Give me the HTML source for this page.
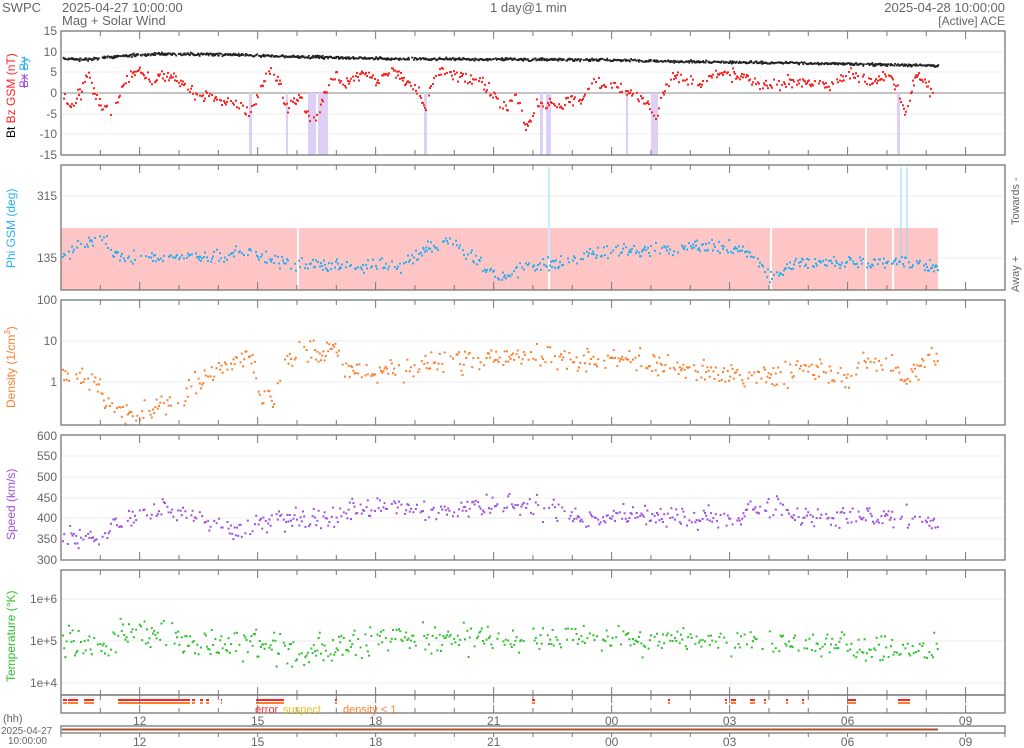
<!DOCTYPE html>
<html><head><meta charset="utf-8">
<style>
html,body{margin:0;padding:0;background:#fff;}
svg{display:block;font-family:"Liberation Sans",sans-serif;}
text{fill:#666;}
</style></head>
<body>
<svg id="s" width="1024" height="748" xmlns="http://www.w3.org/2000/svg">
<text x="2" y="12" font-size="13">SWPC</text>
<text x="62" y="12" font-size="13">2025-04-27 10:00:00</text>
<text x="62" y="25" font-size="13">Mag + Solar Wind</text>
<text x="490" y="12" font-size="13">1 day@1 min</text>
<text x="1005" y="12" font-size="13" text-anchor="end">2025-04-28 10:00:00</text>
<text x="1005" y="25" font-size="12" text-anchor="end">[Active] ACE</text>
<g id="bg"></g>
<g id="pts"></g>
<g id="frame" fill="none" stroke="#777" stroke-width="1.3"></g>
<g font-size="12" text-anchor="end">
<text x="57" y="35">15</text><text x="57" y="56">10</text><text x="57" y="76">5</text><text x="57" y="97">0</text><text x="57" y="118">-5</text><text x="57" y="138">-10</text><text x="57" y="159">-15</text>
<text x="57" y="200">315</text><text x="57" y="262">135</text>
<text x="57" y="304">100</text><text x="57" y="345">10</text><text x="57" y="386">1</text>
<text x="57" y="440">600</text><text x="57" y="460">550</text><text x="57" y="481">500</text><text x="57" y="502">450</text><text x="57" y="522">400</text><text x="57" y="543">350</text><text x="57" y="564">300</text>
<text x="57" y="603">1e+6</text><text x="57" y="645">1e+5</text><text x="57" y="687">1e+4</text>
</g>
<g font-size="12">
<text transform="translate(15,138) rotate(-90)"><tspan style="fill:#000">Bt</tspan>  <tspan style="fill:#f22">Bz GSM (nT)</tspan></text>
<text transform="translate(28,88) rotate(-90)"><tspan style="fill:#a050e0;text-decoration:line-through">Bx</tspan> <tspan style="fill:#2ab0f0;text-decoration:line-through">By</tspan></text>
<text transform="translate(15,268) rotate(-90)" style="fill:#2ab0f0">Phi GSM (deg)</text>
<text transform="translate(15,408) rotate(-90)" style="fill:#f88030">Density (1/cm<tspan font-size="8" dy="-5">3</tspan><tspan dy="5">)</tspan></text>
<text transform="translate(15,540) rotate(-90)" style="fill:#a050e0">Speed (km/s)</text>
<text transform="translate(15,682) rotate(-90)" style="fill:#30c030">Temperature (°K)</text>
<text transform="translate(1019,225) rotate(-90)" font-size="11">Towards -</text>
<text transform="translate(1019,292) rotate(-90)" font-size="11">Away +</text>
</g>
<g font-size="12" text-anchor="middle" id="xl"></g>
<text x="3" y="722" font-size="11">(hh)</text>
<text x="1" y="734" font-size="10">2025-04-27</text>
<text x="8" y="744" font-size="10">10:00:00</text>
<text x="255" y="713" font-size="11" style="fill:#f33">error</text>
<text x="283" y="713" font-size="11" style="fill:#f0c020">suspect</text>
<text x="343" y="713" font-size="11" style="fill:#f88030">density &lt; 1</text>
</svg>
<script>
var NS="http://www.w3.org/2000/svg";
function el(p,t,a){var e=document.createElementNS(NS,t);for(var k in a)e.setAttribute(k,a[k]);p.appendChild(e);return e;}
var seed=7;function rnd(){seed=(seed*16807)%2147483647;return seed/2147483647;}
function gauss(){return (rnd()+rnd()+rnd()-1.5)*1.3;}
var X0=61,X1=1005,PH=39.33,XE=938;
var panels=[[31,155],[165,290],[300,425],[435,560],[570,695],[695,713]];
var bg=document.getElementById('bg'),pts=document.getElementById('pts'),fr=document.getElementById('frame');
[[52,72,93,114,134],[196,258],[341,382],[456,477,498,518,539],[599,641,683]].forEach(function(a,i){a.forEach(function(y){el(bg,'line',{x1:X0,x2:X1,y1:y,y2:y,stroke:'#eee'});});});
el(bg,'line',{x1:X0,x2:X1,y1:93,y2:93,stroke:'#888'});
el(bg,'rect',{x:X0,y:228,width:XE-X0,height:62,fill:'#ffc8c8'});
for(var sx=X0+3;sx<XE;sx+=4)el(bg,'line',{x1:sx,x2:sx,y1:228,y2:290,stroke:'#ffb8b8','stroke-width':0.6});
[297,548,770,865,892].forEach(function(x){el(bg,'rect',{x:x,y:228,width:2,height:62,fill:'#fff'});});
[[249,3],[286,2],[308,5],[313,3],[318,10],[424,3],[540,3],[546,5],[626,2],[651,7],[897,3]].forEach(function(r){el(bg,'rect',{x:r[0],y:93,width:r[1],height:62,fill:'#ddd0f4'});});
[549,901,907].forEach(function(x){el(bg,'line',{x1:x,x2:x,y1:167,y2:260,stroke:'#8fd8f8','stroke-width':1});});
function interp(k,x){for(var i=0;i<k.length-1;i++){if(x<=k[i+1][0]){var t=(x-k[i][0])/(k[i+1][0]-k[i][0]);return k[i][1]+t*(k[i+1][1]-k[i][1]);}}return k[k.length-1][1];}
function series(k,col,noise,step,drop,sz){for(var x=X0+1;x<XE;x+=step){if(rnd()<drop)continue;var y=interp(k,x)+gauss()*noise;el(pts,'rect',{x:x,y:y,width:sz,height:sz,fill:col});}}
series([[61,57],[80,59],[120,55],[160,53],[240,54],[300,56],[400,58],[600,59],[700,61],[850,63],[938,65]],'#222',1.0,0.6,0.2,1.8);
var bz=[[61,0],[70,-3],[80,0],[88,5],[92,1],[100,-3],[110,-4],[125,3],[138,6],[150,3],[165,5],[180,3],[195,0],[215,-1],[240,-3],[250,-5],[255,-1],[262,2],[270,6],[278,3],[285,-4],[290,-2],[300,-1],[305,-5],[315,-6],[325,1],[335,5],[345,2],[360,5],[375,3],[390,6],[405,3],[418,0],[425,-4],[430,2],[440,6],[460,4],[480,3],[495,-1],[505,-4],[515,0],[525,-8],[535,-3],[545,-2],[560,-3],[570,-1],[580,-2],[590,3],[610,2],[630,0],[645,-2],[655,-6],[665,2],[675,4],[700,3],[720,5],[745,4],[760,2],[800,3],[830,2],[850,5],[870,3],[890,5],[905,-5],[915,5],[930,1],[938,-2]].map(function(p){return [p[0],93-p[1]*4.13];});
series(bz,'#f22',4.5,1.0,0.3,2);
series([[61,255],[90,240],[105,238],[115,255],[200,258],[250,250],[270,262],[350,265],[400,265],[440,240],[460,245],[480,262],[500,278],[520,268],[540,263],[560,262],[600,250],[650,250],[700,245],[740,248],[760,262],[770,278],[790,262],[850,262],[900,262],[938,266]],'#2ab0f0',5,1.0,0.35,2);
series([[61,378],[80,372],[95,385],[110,410],[140,412],[180,400],[210,370],[250,353],[260,395],[270,405],[285,360],[300,352],[330,352],[350,372],[400,370],[450,360],[500,362],[520,354],[560,356],[620,358],[700,370],[760,376],[820,370],[848,385],[860,360],[890,362],[905,380],[920,370],[938,352]],'#f88030',9,1.2,0.3,2);
var sp=function(v){return 436+(600-v)*0.4133;};
series([[61,360],[100,358],[120,395],[150,432],[200,405],[230,375],[270,398],[330,402],[350,425],[450,425],[510,440],[560,415],[600,398],[630,412],[700,402],[740,410],[770,440],[800,405],[880,410],[938,392]].map(function(p){return [p[0],sp(p[1])];}),'#a050e0',8,1.2,0.3,2);
series([[61,642],[100,650],[120,628],[140,630],[200,645],[250,642],[300,652],[350,645],[400,636],[450,636],[500,638],[600,636],[700,640],[800,644],[850,648],[938,648]],'#30c030',11,1.2,0.3,2);
panels.forEach(function(p){el(fr,'rect',{x:X0,y:p[0],width:X1-X0,height:p[1]-p[0]});});
el(fr,'rect',{x:X0,y:726,width:X1-X0,height:7});
el(bg,'line',{x1:X0+1,x2:XE,y1:729.5,y2:729.5,stroke:'#b05030','stroke-width':2});
for(var h=0;h<=24;h++){var x=X0+h*PH;if(x>X1)break;var big=(h-2)%3==0;var L=big?8:5;
panels.forEach(function(p){el(fr,'line',{x1:x,x2:x,y1:p[1],y2:p[1]-L,'stroke-width':1});el(fr,'line',{x1:x,x2:x,y1:p[0],y2:p[0]+L,'stroke-width':1});});
el(fr,'line',{x1:x,x2:x,y1:733,y2:737,'stroke-width':1});}
var labs=['12','15','18','21','00','03','06','09'],xl=document.getElementById('xl');
labs.forEach(function(l,i){var x=X0+(2+3*i)*PH;var t=el(xl,'text',{x:x,y:725});t.textContent=l;var t2=el(xl,'text',{x:x,y:746});t2.textContent=l;});
[[63,4],[68,10],[84,10],[118,72],[192,3],[200,3],[206,3],[221,1],[256,26],[282,2],[335,2],[532,3],[668,2],[725,2],[731,5],[750,5],[764,2],[786,2],[802,2],[847,9],[898,12]].forEach(function(f){el(pts,'rect',{x:f[0],y:699,width:f[1],height:2,fill:'#f22'});el(pts,'rect',{x:f[0],y:702,width:f[1],height:2,fill:'#f88030'});});
</script>
</body></html>
